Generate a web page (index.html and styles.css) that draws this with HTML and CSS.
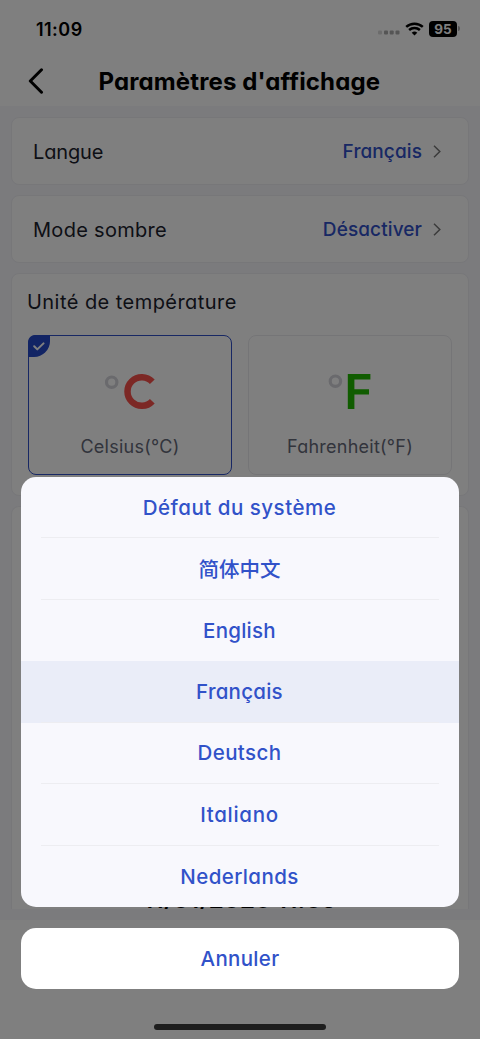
FILE: index.html
```
<!DOCTYPE html>
<html lang="fr">
<head>
<meta charset="utf-8">
<title>Paramètres d'affichage</title>
<link rel="stylesheet" href="styles.css">
</head>
<body>
<div class="screen">
  <header class="top">
    <div class="status">
      <span class="clock">11:09</span>
      <span class="indicators">
        <svg class="signal" width="22" height="5" viewBox="0 0 22 5"><rect x="0" y=".5" width="4" height="4" rx="1" opacity=".45"/><rect x="6" y=".5" width="4" height="4" rx="1"/><rect x="11.7" y=".5" width="4" height="4" rx="1"/><rect x="17.5" y=".5" width="4" height="4" rx="1"/></svg>
        <svg class="wifi" width="19" height="14" viewBox="0 0 19 14"><path d="M1.2 4.9a12.2 12.2 0 0 1 16.6 0" /><path d="M4.1 8a8 8 0 0 1 10.8 0"/><path class="wifi-dot" d="M9.5 13.5 6.7 10.7a4.1 4.1 0 0 1 5.6 0Z"/></svg>
        <span class="battery">95</span><span class="battery-cap"></span>
      </span>
    </div>
    <div class="titlebar">
      <svg class="back" width="16" height="26" viewBox="0 0 16 26"><path d="M13.5 1.8 2.3 13l11.2 11.2"/></svg>
      <h1 class="title">Paramètres d'affichage</h1>
    </div>
  </header>
  <main class="content">
    <section class="card row">
      <span class="label langue">Langue</span>
      <span class="value">Français</span>
      <svg class="chevron" width="8" height="13" viewBox="0 0 8 13"><path d="m1 .8 5.8 5.7L1 12.2"/></svg>
    </section>
    <section class="card row">
      <span class="label">Mode sombre</span>
      <span class="value">Désactiver</span>
      <svg class="chevron" width="8" height="13" viewBox="0 0 8 13"><path d="m1 .8 5.8 5.7L1 12.2"/></svg>
    </section>
    <section class="card units">
      <h2 class="unit-title">Unité de température</h2>
      <div class="unit-list">
        <div class="unit selected">
          <span class="check"><svg width="12" height="9" viewBox="0 0 12 9"><path d="m1.2 4.3 3.1 3.1L10.5 1.4"/></svg></span>
          <svg class="unit-icon" width="60" height="44" viewBox="0 0 60 44"><circle class="degree" cx="11.7" cy="12.2" r="5.2"/><path class="celsius" d="M52.3 11.8A14.3 14.3 0 1 0 52.3 31.2"/></svg>
          <span class="unit-name">Celsius(°C)</span>
        </div>
        <div class="unit">
          <svg class="unit-icon" width="60" height="44" viewBox="0 0 60 44"><circle class="degree" cx="15.4" cy="11.2" r="5.2"/><path class="fahrenheit" d="M27.8 4H50.4v5.5H34.4v9.8h14.6v5.3H34.4V39h-6.6Z"/></svg>
          <span class="unit-name fahr">Fahrenheit(°F)</span>
        </div>
      </div>
    </section>
    <section class="card time"><span class="date">11/01/2026 11:09</span></section>
  </main>
  <footer class="bottom"></footer>
  <div class="overlay">
    <ul class="sheet">
      <li class="option"><span class="o-default">Défaut du système</span></li>
      <li class="option"><span class="o-zh" lang="zh">简体中文</span></li>
      <li class="option last-before"><span>English</span></li>
      <li class="option active"><span>Français</span></li>
      <li class="option"><span class="o-de">Deutsch</span></li>
      <li class="option"><span class="o-it">Italiano</span></li>
      <li class="option"><span class="o-nl">Nederlands</span></li>
    </ul>
    <button class="cancel">Annuler</button>
    <div class="home"></div>
  </div>
</div>
</body>
</html>
```
FILE: styles.css
```
* { box-sizing: border-box; }
body { margin: 0; font-family: Inter, "Noto Sans CJK SC", sans-serif; font-feature-settings: "cv11"; }
.screen { position: relative; width: 480px; height: 1039px; overflow: hidden; display: flex; flex-direction: column; background: #f6f6fb; }
.top { height: 106px; background: #fff; }
.status { height: 57px; padding: 0 20px 0 36px; display: flex; align-items: center; justify-content: space-between; }
.clock { padding-top: 1px; font-size: 18px; font-weight: 600; letter-spacing: .45px; }
.indicators { display: flex; align-items: center; }
.signal { fill: #aaa; margin: 8px 5px 0 0; }
.wifi { fill: none; stroke: #000; stroke-width: 2.5; margin-right: 5px; }
.wifi-dot { fill: #000; stroke: none; }
.battery { width: 28px; height: 16px; border-radius: 4px; background: #000; color: #fff; font-size: 13.5px; font-weight: 700; line-height: 16px; text-align: center; }
.battery-cap { width: 2px; height: 5px; margin-left: 1px; border-radius: 0 2px 2px 0; background: #aaa; }
.titlebar { height: 48px; padding-left: 28px; display: flex; align-items: center; }
.back { fill: none; stroke: #000; stroke-width: 3; stroke-linecap: round; stroke-linejoin: round; }
.title { margin: 0 0 0 54.5px; font-size: 24px; font-weight: 700; letter-spacing: .13px; white-space: nowrap; }
.content { height: 814px; padding: 11px 11px 10px; display: flex; flex-direction: column; gap: 10px; overflow: hidden; }
.card { flex: none; border: 1px solid #efeff3; border-radius: 8px; background: #fff; }
.row { height: 68px; padding: 1px 27px 0 21px; display: flex; align-items: center; color: #1b212c; }
.label { flex: 1; font-size: 20px; letter-spacing: .3px; }
.langue { letter-spacing: -.15px; }
.value { margin-right: 11px; color: #3150c8; font-size: 19px; font-weight: 500; letter-spacing: .1px; }
.chevron { fill: none; stroke: #777; stroke-width: 1.5; }
.units { height: 223px; padding: 16px 15px 0; }
.unit-title { margin: 0; font-size: 20px; font-weight: 400; line-height: 25px; color: #1b212c; letter-spacing: .45px; }
.unit-list { margin: 20px 0 0 1px; display: grid; grid-template-columns: 204px 204px; gap: 16px; }
.unit { position: relative; height: 140px; border: 1px solid #ebebef; border-radius: 8px; display: flex; flex-direction: column; align-items: center; padding-top: 34px; }
.selected { border-color: #3150c8; }
.check { position: absolute; left: -1px; top: -1px; width: 22px; height: 22px; border-radius: 7px 0 16px 0; background: #2548c8; display: flex; align-items: center; justify-content: center; }
.check path { fill: none; stroke: #fff; stroke-width: 2; stroke-linecap: round; stroke-linejoin: round; }
.degree { fill: none; stroke: #d4d4db; stroke-width: 3.2; }
.celsius { fill: none; stroke: #f9504a; stroke-width: 6.5; }
.fahrenheit { fill: #21b900; }
.unit-name { margin-top: 22px; font-size: 18px; line-height: 22px; color: #656979; letter-spacing: .25px; }
.time { height: 403px; border-bottom: 0; border-radius: 8px 8px 0 0; overflow: hidden; display: flex; justify-content: center; align-items: flex-end; }
.date { font-size: 24px; font-weight: 600; line-height: 26px; margin-bottom: -4px; letter-spacing: .2px; white-space: nowrap; }
.bottom { flex: 1; background: #fff; }
.overlay { position: absolute; inset: 0; padding: 0 21px 9px; background: rgba(0,0,0,.5); display: flex; flex-direction: column; justify-content: flex-end; color: #3152c9; font-size: 20.5px; font-weight: 500; letter-spacing: .25px; }
.sheet { height: 430px; margin: 0 0 21px; padding: 0; list-style: none; border-radius: 15px; overflow: hidden; background: #f8f8fd; display: grid; grid-template-rows: repeat(7, 1fr); }
.option { padding: 0 20px; display: grid; }
.option span { display: flex; align-items: center; justify-content: center; padding-right: 1px; border-bottom: 1px solid #ededf1; }
.option:last-child span { border: 0; }
.active { background: #eaedf8; }
.option.last-before span { border-color: transparent; }
.option .o-default { letter-spacing: .5px; }
.option .o-zh { letter-spacing: 0; padding-bottom: 2px; }
.option .o-de, .option .o-nl { letter-spacing: .4px; }
.option .o-it { letter-spacing: .7px; }
.cancel { height: 61px; border: 0; border-radius: 15px; background: #fff; color: inherit; font: inherit; letter-spacing: .3px; font-feature-settings: "cv11"; }
.home { width: 172px; height: 6px; margin: 35px auto 0; border-radius: 3px; background: #1e1e1e; }
```
